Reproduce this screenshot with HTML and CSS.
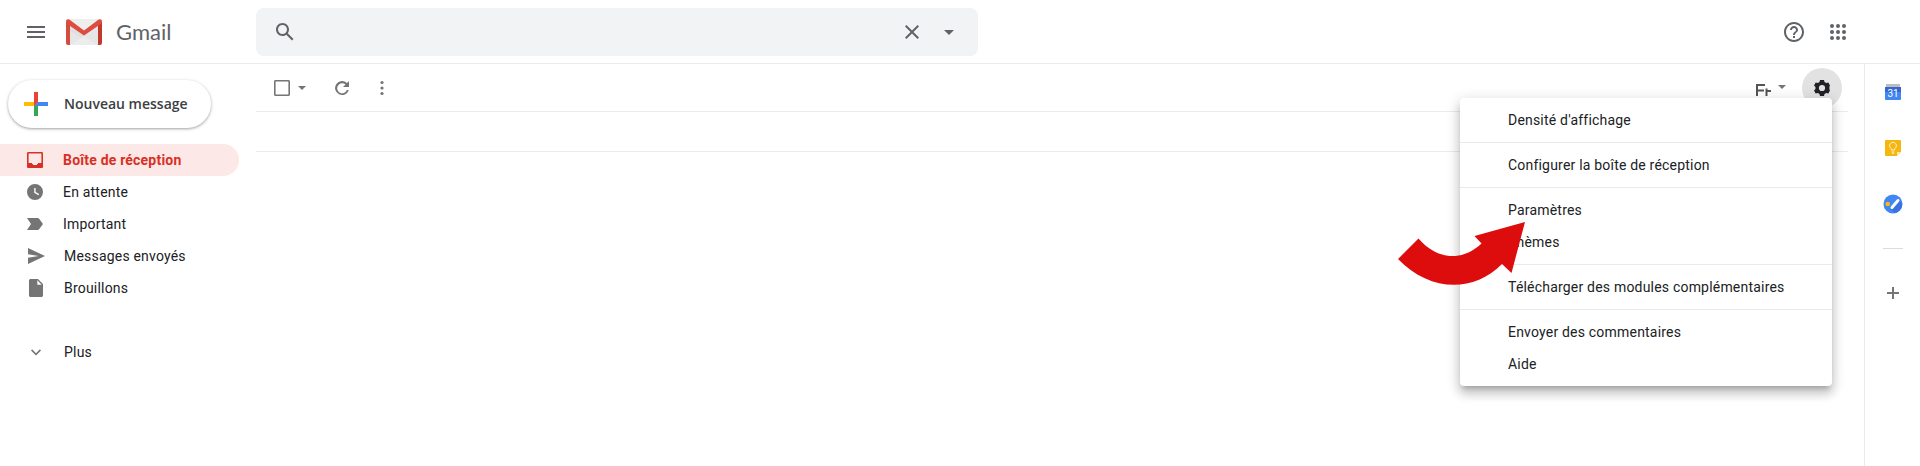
FILE: index.html
```html
<!DOCTYPE html>
<html lang="fr">
<head>
<meta charset="utf-8">
<title>Gmail</title>
<link rel="stylesheet" href="styles.css">
</head>
<body>
<header class="topbar">
  <svg class="icon dark burger" viewBox="0 0 24 24"><path d="M3 18h18v-2H3v2zm0-5h18v-2H3v2zm0-7v2h18V6H3z"/></svg>
  <svg class="logo" viewBox="0 0 36 26">
    <path fill="#e6e6e6" d="M2 0h32v26H2z"/>
    <path fill="#eeeeee" d="M2 0h32L18 13z"/>
    <path fill="#dadada" d="M4 7l14 9.500L28 26 4 12z" opacity=".5"/>
    <path fill="#f2f2f2" d="M5 26l13-9 13 9z" opacity=".6"/>
    <path fill="#d54b3d" d="M0 2.500V24a2 2 0 0 0 2 2h2V6z"/>
    <path fill="#c03a2b" d="M36 2.500V24a2 2 0 0 1-2 2h-2V6z"/>
    <path fill="#de4b3f" d="M0 2.500C0 .4 2.200-.4 4 1l14 10.500L32 1c1.800-1.400 4-.6 4 1.500 0 1-.4 1.800-1.200 2.400L18 16.500 1.200 4.900C.4 4.300 0 3.500 0 2.500z"/>
  </svg>
  <span class="brand">Gmail</span>
  <div class="search">
    <svg class="icon dark" viewBox="0 0 24 24"><path d="M20.490 19l-5.730-5.730C15.530 12.200 16 10.910 16 9.500 16 5.910 13.090 3 9.500 3S3 5.910 3 9.500 5.910 16 9.500 16c1.410 0 2.700-.47 3.770-1.240L19 20.490 20.490 19zM5 9.500C5 7.010 7.010 5 9.500 5S14 7.010 14 9.500 11.990 14 9.500 14 5 11.990 5 9.500z"/></svg>
    <svg class="icon dark clear" viewBox="0 0 24 24"><path d="M19 6.410L17.590 5 12 10.590 6.410 5 5 6.410 10.590 12 5 17.590 6.410 19 12 13.410 17.590 19 19 17.590 13.410 12z"/></svg>
    <svg class="icon dark" viewBox="0 0 24 24"><path d="M7 10l5 5 5-5z"/></svg>
  </div>
  <div class="top-actions">
    <svg class="icon dark" viewBox="0 0 24 24"><path d="M11 18h2v-2h-2v2zm1-16C6.480 2 2 6.480 2 12s4.480 10 10 10 10-4.480 10-10S17.520 2 12 2zm0 18c-4.410 0-8-3.590-8-8s3.590-8 8-8 8 3.590 8 8-3.590 8-8 8zm0-14c-2.210 0-4 1.790-4 4h2c0-1.100.9-2 2-2s2 .9 2 2c0 2-3 1.750-3 5h2c0-2.250 3-2.500 3-5 0-2.210-1.790-4-4-4z"/></svg>
    <svg class="icon dark" viewBox="0 0 24 24"><g><circle cx="6" cy="6" r="2"/><circle cx="12" cy="6" r="2"/><circle cx="18" cy="6" r="2"/><circle cx="6" cy="12" r="2"/><circle cx="12" cy="12" r="2"/><circle cx="18" cy="12" r="2"/><circle cx="6" cy="18" r="2"/><circle cx="12" cy="18" r="2"/><circle cx="18" cy="18" r="2"/></g></svg>
  </div>
</header>
<div class="body">
  <nav class="sidebar">
    <button class="compose">
      <svg class="icon" viewBox="0 0 24 24"><path fill="#ea4335" d="M10 0h4v10l-4 4z"/><path fill="#4285f4" d="M14 10h10v4H10z"/><path fill="#34a853" d="M10 14h4v10h-4z"/><path fill="#fbbc04" d="M0 10h10v4H0z"/><path fill="#ea4335" d="M10 10h4l-4 4z"/></svg>
      <span>Nouveau message</span>
    </button>
    <a class="nav active"><svg class="icon" viewBox="0 0 20 20"><path d="M16.670 2H3.320C2.580 2 2 2.590 2 3.330v13.340C2 17.400 2.580 18 3.320 18h13.350c.73 0 1.330-.6 1.330-1.330V3.330C18 2.590 17.400 2 16.670 2zm-.27 11h-3.400v1h-1v1H8v-1H7v-1H3.600V3.600h12.800z"/></svg><span>Boîte de réception</span></a>
    <a class="nav"><svg class="icon" viewBox="0 0 20 20"><path d="M10 2a8 8 0 1 0 0 16 8 8 0 0 0 0-16zm3.400 11.200L9.200 10.700V6h1.400v4l3.500 2.100z"/></svg><span>En attente</span></a>
    <a class="nav"><svg class="icon" viewBox="0 0 20 20"><path d="M2 16l4-6-4-6h10.800c.5 0 1 .25 1.300.7L18 10l-3.900 5.300c-.3.450-.8.700-1.300.7z"/></svg><span>Important</span></a>
    <a class="nav shifted"><svg class="icon" viewBox="0 0 20 20"><path d="M2 18l17-8L2 2v6.200L12.500 10 2 11.800z"/></svg><span>Messages envoyés</span></a>
    <a class="nav shifted"><svg class="icon" viewBox="0 0 20 20"><path d="M12 1H4.500C3.700 1 3 1.700 3 2.500v15c0 .8.700 1.500 1.500 1.500h11c.8 0 1.500-.7 1.500-1.500V6zm-.7 5.700V2.300l4.400 4.400z"/></svg><span>Brouillons</span></a>
    <a class="nav shifted more"><svg class="icon" viewBox="0 0 20 20"><path d="M13.900 7.300L10 11.200 6.100 7.300 5 8.400l5 5 5-5z"/></svg><span>Plus</span></a>
  </nav>
  <main class="content">
    <div class="toolbar">
      <svg class="icon s20 box" viewBox="0 0 20 20"><path d="M16.500 2h-13C2.700 2 2 2.700 2 3.500v13c0 .8.700 1.500 1.500 1.500h13c.8 0 1.500-.7 1.500-1.500v-13c0-.8-.7-1.500-1.500-1.500zm-.1 14.400H3.600V3.600h12.800z"/></svg>
      <svg class="icon s20 caret" viewBox="0 0 20 20"><path d="M6 8l4 4 4-4z"/></svg>
      <svg class="icon s20 reload" viewBox="0 0 20 20"><path d="M17 3v6h-6l2.500-2.500A5 5 0 1 0 14.900 12h1.900A7 7 0 1 1 15 5z"/></svg>
      <svg class="icon s20 dots" viewBox="0 0 20 20"><circle cx="10" cy="4.500" r="1.600"/><circle cx="10" cy="10" r="1.600"/><circle cx="10" cy="15.500" r="1.600"/></svg>
      <svg class="icon lang" viewBox="0 0 16 13"><path d="M0 0h9v2H2v3.500h6v2H2V12H0zM9.500 4.500h2V6H15v2h-3.500v4h-2z"/></svg>
      <svg class="icon s20 langcaret" viewBox="0 0 20 20"><path d="M6 8l4 4 4-4z"/></svg>
      <span class="gear"><svg class="icon s20" viewBox="0 0 20 20"><path d="M17.400 11.200c.05-.4.100-.8.100-1.200s-.05-.8-.1-1.200L18 7.500 16.300 4.400l-2.200.6c-.5-.4-1-.7-1.600-.9L12 2H8l-.5 2.100c-.6.2-1.100.5-1.600.9l-2.200-.6L2 7.500l1.500 1.400a7 7 0 0 0 0 2.200L2 12.500l1.700 3.100 2.200-.6c.5.4 1 .7 1.600.9L8 18h4l.5-2.100c.6-.2 1.100-.5 1.600-.9l2.200.6 1.700-3.100zM10 13.100a3.100 3.100 0 1 1 0-6.200 3.100 3.100 0 0 1 0 6.200z"/></svg></span>
    </div>
    <div class="empty-row"></div>
  </main>
  <aside class="addons">
    <svg class="icon cal" viewBox="0 0 16 16"><path fill="#bdbdbd" d="M1 0h14v4H1z"/><path fill="#4285f4" d="M0 3h16v12a1 1 0 0 1-1 1H1a1 1 0 0 1-1-1z"/><path fill="#3367d6" d="M0 3h16v5H0z"/><text x="8" y="13">31</text></svg>
    <svg class="icon keep" viewBox="0 0 16 16"><path fill="#f5b70f" d="M1 0h14a1 1 0 0 1 1 1v11l-4 4H1a1 1 0 0 1-1-1V1a1 1 0 0 1 1-1z"/><path fill="#fce6a5" d="M16 12l-4 4v-4z"/><path fill="none" stroke="#fff3cf" d="M6.500 10V8.800a3.400 3.400 0 1 1 3 0V10zM6.500 12h3M7 13.300h2"/></svg>
    <svg class="icon tasks" viewBox="0 0 20 20"><circle cx="10" cy="10" r="9.500" fill="#4285f4"/><path fill="#3a72de" d="M8 15l8-9 3.200 3.500A9.500 9.500 0 0 1 12 19z"/><circle cx="4.700" cy="10" r="2.300" fill="#fbbc04"/><path stroke="#fff" stroke-width="3" stroke-linecap="round" d="M9 13.500l6-7"/></svg>
    <hr class="rule">
    <svg class="icon plus" viewBox="0 0 12 12"><path d="M5 0h2v5h5v2H7v5H5V7H0V5h5z"/></svg>
  </aside>
</div>
<div class="menu">
  <div class="group"><span>Densité d'affichage</span></div>
  <div class="group"><span>Configurer la boîte de réception</span></div>
  <div class="group"><span>Paramètres</span><span>Thèmes</span></div>
  <div class="group"><span>Télécharger des modules complémentaires</span></div>
  <div class="group"><span>Envoyer des commentaires</span><span>Aide</span></div>
</div>
<svg class="arrow" viewBox="0 0 128 63"><path fill="#de0d0d" d="M0 37L20.500 16.500C40 39 65 39 83.500 21.500L76.500 14 127 0 113.500 51 104 42C74 72 31 69 0 37z"/></svg>
</body>
</html>
```

FILE: styles.css
```css
* { box-sizing: border-box; }
body {
  margin: 0;
  height: 466px;
  overflow: hidden;
  display: flex;
  flex-direction: column;
  background: #fff;
  color: #202124;
  font: 14px Roboto, "Liberation Sans", sans-serif;
}
.icon { display: block; flex: none; width: 24px; height: 24px; fill: #757575; }
.dark { fill: #5f6368; }
.s20 { width: 20px; height: 20px; }
.topbar {
  flex: none;
  height: 64px;
  display: flex;
  align-items: center;
  border-bottom: 1px solid #ebebeb;
  padding: 1px 70px 0 24px;
}
.logo { width: 36px; height: 26px; margin-left: 18px; }
.brand {
  width: 140px;
  margin-left: 14px;
  color: #5f6368;
  font: 22px/24px Lato, sans-serif;
}
.search {
  width: 722px;
  height: 48px;
  display: flex;
  align-items: center;
  gap: 13px;
  padding: 0 17px;
  border-radius: 8px;
  background: #f1f3f4;
}
.clear { margin-left: auto; }
.top-actions { display: flex; gap: 20px; margin-left: auto; }
.body { flex: 1; display: flex; }
.sidebar { width: 256px; padding-top: 16px; }
.compose {
  width: 203px;
  height: 48px;
  display: flex;
  align-items: center;
  gap: 16px;
  margin: 0 0 16px 8px;
  padding: 0 0 0 16px;
  border: 0;
  border-radius: 24px;
  background: #fff;
  box-shadow: 0 1px 2px rgba(60,64,67,.302), 0 1px 3px 1px rgba(60,64,67,.149);
  color: #3c4043;
  font: 600 14px "Open Sans", sans-serif;
  white-space: nowrap;
}
.compose span { padding-bottom: 2px; }
.nav {
  width: 239px;
  height: 32px;
  display: flex;
  align-items: center;
  gap: 18px;
  padding-left: 25px;
  letter-spacing: .2px;
}
.nav .icon { width: 20px; height: 20px; }
.shifted { padding-left: 26px; }
.active { border-radius: 0 16px 16px 0; background: #fce8e6; color: #d93025; font-weight: 700; }
.active .icon { fill: #d93025; }
.more { margin-top: 32px; }
.content { width: 1592px; }
.toolbar {
  height: 48px;
  display: flex;
  align-items: center;
  border-bottom: 1px solid #ebebeb;
  padding: 1px 6px 0 16px;
}
.reload { margin-left: 20px; }
.dots { margin-left: 20px; }
.lang { width: 16px; height: 13px; margin: 4px 0 0 auto; fill: #555; }
.langcaret { margin: 0 0 2px; }
.gear {
  width: 40px;
  height: 40px;
  display: grid;
  place-items: center;
  margin-left: 10px;
  border-radius: 50%;
  background: #e2e2e2;
}
.gear .icon { fill: #202124; }
.empty-row { height: 40px; border-bottom: 1px solid #ebebeb; }
.addons {
  width: 56px;
  display: flex;
  flex-direction: column;
  align-items: center;
  margin-left: 16px;
  padding-top: 20px;
  border-left: 1px solid #ebebeb;
}
.cal, .keep { width: 16px; height: 16px; }
.cal text { fill: #fff; font: 10px Roboto, sans-serif; text-anchor: middle; }
.keep { margin-top: 40px; }
.tasks { width: 20px; height: 20px; margin-top: 38px; }
.rule { width: 20px; height: 1px; margin: 34px 0 0; border: 0; background: #dadce0; }
.plus { width: 12px; height: 12px; margin-top: 38px; }
.menu {
  position: absolute;
  left: 1460px;
  top: 98px;
  width: 372px;
  border-radius: 4px;
  background: #fff;
  box-shadow: 0 8px 10px 1px rgba(0,0,0,.14), 0 3px 14px 2px rgba(0,0,0,.12), 0 5px 5px -3px rgba(0,0,0,.2);
  letter-spacing: .2px;
  white-space: nowrap;
}
.group { display: grid; grid-auto-rows: 32px; align-items: center; padding: 6px 48px; }
.group + .group { border-top: 1px solid #e8eaed; }
.arrow { position: absolute; left: 1398px; top: 222px; width: 128px; height: 63px; }
```
